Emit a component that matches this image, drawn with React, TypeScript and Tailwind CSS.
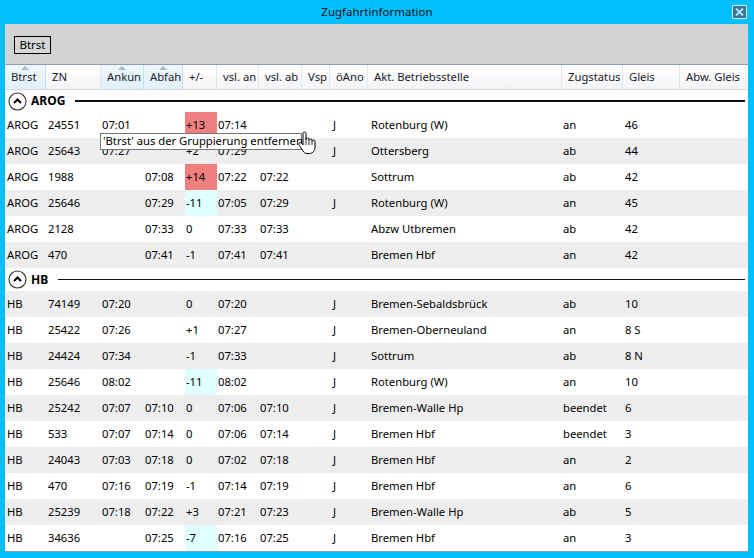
import React from "react";

type Row = {
  b: string;
  zn: string;
  an: string;
  ab: string;
  d: string;
  dc?: "red" | "cyan";
  va: string;
  vb: string;
  o: string;
  akt: string;
  st: string;
  g: string;
  gray: boolean;
};

const arog: Row[] = [
  { b: "AROG", zn: "24551", an: "07:01", ab: "", d: "+13", dc: "red", va: "07:14", vb: "", o: "J", akt: "Rotenburg (W)", st: "an", g: "46", gray: false },
  { b: "AROG", zn: "25643", an: "07:27", ab: "", d: "+2", va: "07:29", vb: "", o: "J", akt: "Ottersberg", st: "ab", g: "44", gray: true },
  { b: "AROG", zn: "1988", an: "", ab: "07:08", d: "+14", dc: "red", va: "07:22", vb: "07:22", o: "", akt: "Sottrum", st: "ab", g: "42", gray: false },
  { b: "AROG", zn: "25646", an: "", ab: "07:29", d: "-11", dc: "cyan", va: "07:05", vb: "07:29", o: "J", akt: "Rotenburg (W)", st: "an", g: "45", gray: true },
  { b: "AROG", zn: "2128", an: "", ab: "07:33", d: "0", va: "07:33", vb: "07:33", o: "", akt: "Abzw Utbremen", st: "ab", g: "42", gray: false },
  { b: "AROG", zn: "470", an: "", ab: "07:41", d: "-1", va: "07:41", vb: "07:41", o: "", akt: "Bremen Hbf", st: "an", g: "42", gray: true },
];

const hb: Row[] = [
  { b: "HB", zn: "74149", an: "07:20", ab: "", d: "0", va: "07:20", vb: "", o: "J", akt: "Bremen-Sebaldsbrück", st: "ab", g: "10", gray: true },
  { b: "HB", zn: "25422", an: "07:26", ab: "", d: "+1", va: "07:27", vb: "", o: "J", akt: "Bremen-Oberneuland", st: "an", g: "8 S", gray: false },
  { b: "HB", zn: "24424", an: "07:34", ab: "", d: "-1", va: "07:33", vb: "", o: "J", akt: "Sottrum", st: "ab", g: "8 N", gray: true },
  { b: "HB", zn: "25646", an: "08:02", ab: "", d: "-11", dc: "cyan", va: "08:02", vb: "", o: "J", akt: "Rotenburg (W)", st: "an", g: "10", gray: false },
  { b: "HB", zn: "25242", an: "07:07", ab: "07:10", d: "0", va: "07:06", vb: "07:10", o: "J", akt: "Bremen-Walle Hp", st: "beendet", g: "6", gray: true },
  { b: "HB", zn: "533", an: "07:07", ab: "07:14", d: "0", va: "07:06", vb: "07:14", o: "J", akt: "Bremen Hbf", st: "beendet", g: "3", gray: false },
  { b: "HB", zn: "24043", an: "07:03", ab: "07:18", d: "0", va: "07:02", vb: "07:18", o: "J", akt: "Bremen Hbf", st: "an", g: "2", gray: true },
  { b: "HB", zn: "470", an: "07:16", ab: "07:19", d: "-1", va: "07:14", vb: "07:19", o: "J", akt: "Bremen Hbf", st: "an", g: "6", gray: false },
  { b: "HB", zn: "25239", an: "07:18", ab: "07:22", d: "+3", va: "07:21", vb: "07:23", o: "J", akt: "Bremen-Walle Hp", st: "ab", g: "5", gray: true },
  { b: "HB", zn: "34636", an: "", ab: "07:25", d: "-7", dc: "cyan", va: "07:16", vb: "07:25", o: "J", akt: "Bremen Hbf", st: "an", g: "3", gray: false },
];

const GRID =
  "grid grid-cols-[41px_55px_43px_39px_34px_42px_43px_28px_38px_194px_61px_57px_66px]";

function Cell({ children }: { children?: React.ReactNode }) {
  return <div className="flex items-center pl-[2px] whitespace-nowrap overflow-hidden">{children}</div>;
}

function DataRow({ r }: { r: Row }) {
  const dbg = r.dc === "red" ? "bg-[#f08080]" : r.dc === "cyan" ? "bg-[#e0ffff]" : "";
  return (
    <div className={`${GRID} h-[26px] ${r.gray ? "bg-[#eeeeee]" : "bg-white"}`}>
      <Cell>{r.b}</Cell>
      <Cell>{r.zn}</Cell>
      <div className="flex items-center pl-[1px]">{r.an}</div>
      <div className="flex items-center pl-[1px]">{r.ab}</div>
      <div className="flex h-full pl-[2px]">
        <div className={`flex items-center w-full pl-[1px] ${dbg}`}>{r.d}</div>
      </div>
      <div className="flex items-center pl-[1px]">{r.va}</div>
      <div className="flex items-center pl-[1px]">{r.vb}</div>
      <Cell></Cell>
      <div className="flex items-center pl-[3px]">{r.o}</div>
      <div className="flex items-center pl-[3px] whitespace-nowrap">{r.akt}</div>
      <div className="flex items-center pl-[1px]">{r.st}</div>
      <Cell>{r.g}</Cell>
      <Cell></Cell>
    </div>
  );
}

function GroupHeader({ name, h }: { name: string; h: string }) {
  return (
    <div className={`flex items-center ${h} bg-white pr-[2px]`}>
      <svg width="19" height="19" viewBox="0 0 19 19" className="ml-[3px] shrink-0">
        <circle cx="9.5" cy="9.5" r="8.5" fill="white" stroke="#333" strokeWidth="1.1" />
        <path d="M6 11 L9.5 7.5 L13 11" fill="none" stroke="#000" strokeWidth="2" />
      </svg>
      <span className="ml-[4px] font-bold text-[12px] text-black">{name}</span>
      <div className="ml-[10px] flex-1 h-[1.5px] bg-[#111] mr-[1px]" />
    </div>
  );
}

function Arrow() {
  return (
    <svg width="8" height="4" viewBox="0 0 8 4" className="absolute top-[1px] left-1/2 -translate-x-1/2">
      <path d="M0 4 L4 0 L8 4 Z" fill="#a9b9c9" />
    </svg>
  );
}

function HCell({ label, sorted }: { label: string; sorted?: boolean }) {
  return (
    <div
      className={`relative flex items-center pl-[6px] whitespace-nowrap border-r ${
        sorted
          ? "bg-gradient-to-b from-[#eef7fd] to-[#e1f0fa] border-[#bfe0f4]"
          : "bg-gradient-to-b from-white to-[#f3f4f6] border-[#e3e6ea]"
      }`}
    >
      {sorted && <Arrow />}
      {label}
    </div>
  );
}

export default function App() {
  return (
    <div
      className="relative w-[754px] h-[558px] bg-[#00bfff] overflow-hidden text-[11.25px] text-black"
      style={{ fontFamily: "'Noto Sans', 'Open Sans', sans-serif" }}
    >
      {/* title bar */}
      <div className="relative h-[24px] flex items-center justify-center">
        <span className="text-[11.5px] text-[#111]">Zugfahrtinformation</span>
        <div className="absolute right-[7px] top-[5px] w-[15px] h-[14px] bg-[#3b7493] border border-[#c6ecf9] flex items-center justify-center">
          <svg width="9" height="8" viewBox="0 0 9 8">
            <path d="M1 0.5 L8 7.5 M8 0.5 L1 7.5" stroke="#a8e6fa" strokeWidth="2" />
          </svg>
        </div>
      </div>
      {/* body */}
      <div className="ml-[5px] mr-[6px] h-[528px] flex flex-col bg-white">
        <div className="h-[41px] shrink-0 bg-[#d3d3d3] pt-[12px] pl-[9px] border-b border-[#8d9cb2]">
          <div className="w-[37px] h-[18px] border border-black bg-[#d6d6d6] flex items-center justify-center text-[11.5px]">
            Btrst
          </div>
        </div>
        <div className={`${GRID} h-[25px] shrink-0 border-b border-[#d5d8dd] text-[#1a1a2a]`}>
          <HCell label="Btrst" sorted />
          <HCell label="ZN" />
          <HCell label="Ankun" sorted />
          <HCell label="Abfah" sorted />
          <HCell label="+/-" />
          <HCell label="vsl. an" />
          <HCell label="vsl. ab" />
          <HCell label="Vsp" />
          <HCell label="öAno" />
          <HCell label="Akt. Betriebsstelle" />
          <HCell label="Zugstatus" />
          <HCell label="Gleis" />
          <HCell label="Abw. Gleis" />
        </div>
        <GroupHeader name="AROG" h="h-[22px]" />
        {arog.map((r, i) => (
          <DataRow key={"a" + i} r={r} />
        ))}
        <GroupHeader name="HB" h="h-[23px]" />
        {hb.map((r, i) => (
          <DataRow key={"h" + i} r={r} />
        ))}
        <div className="h-px bg-[#8d9cb2]" />
      </div>

      {/* tooltip */}
      <div className="absolute left-[100px] top-[133px] h-[17px] w-[202px] bg-white border border-[#767676] flex items-center pl-[2px] text-[11.25px] whitespace-nowrap">
        'Btrst' aus der Gruppierung entfernen
      </div>
      {/* hand cursor */}
      <svg width="19" height="24" viewBox="0 0 19 24" className="absolute left-[297px] top-[131px]">
        <path
          d="M6 2.5 A1.5 1.5 0 0 1 9 2.5 L9 9 L9 8.5 A1.5 1.5 0 0 1 12 8.5 L12 9.5 A1.5 1.5 0 0 1 15 9.5 L15 10.5 A1.5 1.5 0 0 1 18 10.5 L18 16 C18 19.5 16 22.5 12.5 22.5 L10 22.5 C8 22.5 7 21.5 6 20 L2.2 14.2 C1.5 13.1 1.9 11.9 2.9 11.7 C3.8 11.5 4.6 12 6 13.8 Z"
          fill="white"
          stroke="black"
          strokeWidth="1"
          strokeLinejoin="round"
        />
        <path d="M9 9 L9 14 M12 9.5 L12 14 M15 10.5 L15 14" stroke="black" strokeWidth="0.8" />
      </svg>
    </div>
  );
}
